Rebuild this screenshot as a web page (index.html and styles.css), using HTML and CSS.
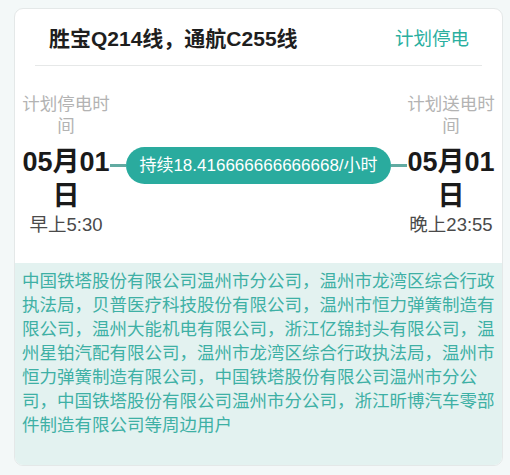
FILE: index.html
```html
<!DOCTYPE html>
<html lang="zh">
<head>
<meta charset="utf-8">
<link rel="stylesheet" href="styles.css">
</head>
<body>
<div class="card">
  <div class="header">
    <div class="title">胜宝Q214线，通航C255线</div>
    <div class="status">计划停电</div>
  </div>
  <div class="timeline">
    <div class="point">
      <div class="label">计划停电时间</div>
      <div class="date">05月01日</div>
      <div class="time">早上5:30</div>
    </div>
    <div class="middle">
      <div class="connector"></div>
      <div class="pill">持续18.416666666666668/小时</div>
      <div class="connector"></div>
    </div>
    <div class="point">
      <div class="label">计划送电时间</div>
      <div class="date">05月01日</div>
      <div class="time">晚上23:55</div>
    </div>
  </div>
  <div class="users">中国铁塔股份有限公司温州市分公司，温州市龙湾区综合行政执法局，贝普医疗科技股份有限公司，温州市恒力弹簧制造有限公司，温州大能机电有限公司，浙江亿锦封头有限公司，温州星铂汽配有限公司，温州市龙湾区综合行政执法局，温州市恒力弹簧制造有限公司，中国铁塔股份有限公司温州市分公司，中国铁塔股份有限公司温州市分公司，浙江昕博汽车零部件制造有限公司等周边用户</div>
</div>
</body>
</html>
```

FILE: styles.css
```css
html, body {
  margin: 0;
  padding: 0;
}
body {
  background: #f3f8f8;
  font-family: "Liberation Sans", "Noto Sans CJK SC", sans-serif;
  padding: 8px 7px 9px 14px;
}
.card {
  width: 487px;
  background: #ffffff;
  border: 1px solid #e4e8e8;
  border-radius: 9px;
  overflow: hidden;
}
.header {
  margin: 0 20px;
  padding: 0 13px 0 14px;
  height: 56px;
  border-bottom: 1px solid #e6e8e8;
  display: flex;
  align-items: center;
  justify-content: space-between;
}
.title {
  font-size: 21px;
  font-weight: bold;
  color: #1e1e1e;
}
.status {
  font-size: 18.5px;
  color: #2aaf9f;
}
.timeline {
  display: flex;
  align-items: center;
  padding: 27px 7px 26px 7px;
}
.point {
  width: 88px;
  flex: 0 0 88px;
  text-align: center;
}
.label {
  font-size: 17.5px;
  line-height: 22px;
  color: #b3b3b3;
}
.date {
  margin-top: 8px;
  font-size: 27px;
  line-height: 34px;
  font-weight: bold;
  color: #1a1a1a;
}
.time {
  font-size: 18.5px;
  line-height: 24px;
  color: #4a4a4a;
  white-space: nowrap;
}
.middle {
  flex: 1;
  display: flex;
  align-items: center;
}
.connector {
  flex: 1;
  height: 3px;
  background: #62aba2;
}
.pill {
  background: #2aab9e;
  color: #ffffff;
  font-size: 17px;
  line-height: 37px;
  padding: 0 13px;
  border-radius: 19px;
  white-space: nowrap;
}
.users {
  background: #e3f2f0;
  color: #3eb0a5;
  font-size: 17.5px;
  line-height: 24px;
  padding: 6px 7px 28px 7px;
}
```
